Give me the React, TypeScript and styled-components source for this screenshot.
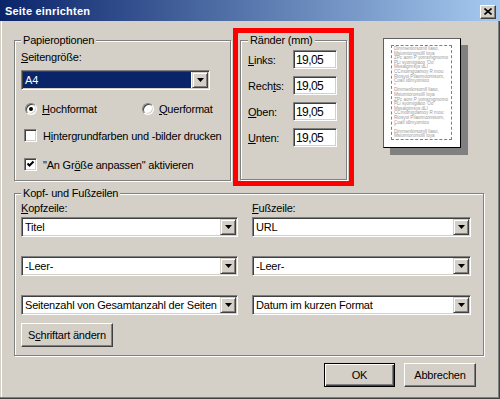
import React from "react";
import styled, { createGlobalStyle } from "styled-components";

const GlobalStyle = createGlobalStyle`
  html, body {
    margin: 0;
    padding: 0;
    background: #d4d0c8;
  }
  body {
    font-family: "Liberation Sans", Arial, sans-serif;
    font-size: 11px;
  }
`;

const Dialog = styled.div`
  width: 500px;
  height: 399px;
  box-sizing: border-box;
  display: flex;
  flex-direction: column;
  background: #d4d0c8;
  color: #000;
  letter-spacing: -0.2px;
  overflow: hidden;
  box-shadow: inset -1px -1px 0 #404040, inset -2px -2px 0 #808080,
    inset 1px 1px 0 #d4d0c8, inset 2px 2px 0 #fff;
`;

const TitleBar = styled.div`
  height: 21px;
  flex: none;
  display: flex;
  align-items: center;
  justify-content: space-between;
  padding: 0 4px 0 5px;
  background: linear-gradient(to right, #0a246a, #a6caf0);
`;

const TitleText = styled.span`
  color: #fff;
  font-weight: bold;
  font-size: 11px;
  letter-spacing: 0.2px;
`;

const CloseButton = styled.div`
  width: 16px;
  height: 14px;
  margin-top: 2px;
  box-sizing: border-box;
  display: flex;
  align-items: center;
  justify-content: center;
  background: #d4d0c8;
  border: 1px solid;
  border-color: #fff #404040 #404040 #fff;
  box-shadow: inset -1px -1px 0 #808080;
`;

const Body = styled.div`
  flex: 1;
  display: flex;
  flex-direction: column;
  padding: 7px 14px 0;
`;

const TopRow = styled.div`
  display: flex;
  align-items: flex-start;
`;

const Group = styled.fieldset`
  margin: 0;
  min-inline-size: 0;
  box-sizing: border-box;
  border: 1px solid #808080;
  box-shadow: 1px 1px 0 #fff, inset 1px 1px 0 #fff;
`;

const Legend = styled.legend`
  padding: 0 2px;
  line-height: 13px;
  background: #d4d0c8;
`;

const PaperGroup = styled(Group)`
  width: 217px;
  height: 147px;
  margin-top: 6px;
  padding: 4px 6px 0 6px;
  display: flex;
  flex-direction: column;
`;

const RedFrame = styled.div`
  width: 121px;
  height: 158px;
  box-sizing: border-box;
  margin-left: 2px;
  border: 5px solid #ff0000;
  padding: 1px 2px;
`;

const MarginGroup = styled(Group)`
  width: 107px;
  height: 146px;
  padding: 3px 4px 0 7px;
  display: flex;
  flex-direction: column;
  gap: 7px;
`;

const HeaderGroup = styled(Group)`
  width: 470px;
  height: 169px;
  margin-top: 1px;
  padding: 2px 12px 0 6px;
  display: flex;
  gap: 14px;
`;

const FieldLabel = styled.div`
  line-height: 13px;
  white-space: nowrap;
`;

const U = styled.span`
  text-decoration: underline;
`;

const ComboSlot = styled.div`
  margin-top: 6px;
`;

const Combo = styled.div<{ $w: number }>`
  width: ${(p) => p.$w}px;
  height: 20px;
  flex: none;
  box-sizing: border-box;
  display: flex;
  background: #fff;
  border: 1px solid;
  border-color: #808080 #fff #fff #808080;
  box-shadow: inset 1px 1px 0 #404040, inset -1px -1px 0 #d4d0c8;
  padding: 1px;
`;

const ComboValue = styled.div<{ $selected?: boolean }>`
  flex: 1;
  display: flex;
  align-items: center;
  padding-left: 2px;
  margin-right: 1px;
  white-space: nowrap;
  overflow: hidden;
  background: ${(p) => (p.$selected ? "#0a246a" : "transparent")};
  color: ${(p) => (p.$selected ? "#fff" : "#000")};
`;

const DropButton = styled.div`
  width: 16px;
  flex: none;
  box-sizing: border-box;
  display: flex;
  align-items: center;
  justify-content: center;
  background: #d4d0c8;
  border: 1px solid;
  border-color: #d4d0c8 #404040 #404040 #d4d0c8;
  box-shadow: inset 1px 1px 0 #fff, inset -1px -1px 0 #808080;
`;

const OptionRow = styled.div<{ $mt: number }>`
  display: flex;
  align-items: center;
  height: 13px;
  margin-top: ${(p) => p.$mt}px;
  white-space: nowrap;
`;

const RadioItem = styled.div<{ $w?: number; $indent?: number }>`
  display: flex;
  align-items: center;
  gap: 5px;
  width: ${(p) => (p.$w ? `${p.$w}px` : "auto")};
  margin-left: ${(p) => p.$indent ?? 0}px;
`;

const RadioCircle = styled.span<{ $checked?: boolean }>`
  position: relative;
  width: 12px;
  height: 12px;
  flex: none;
  box-sizing: border-box;
  border-radius: 50%;
  background: #fff;
  border: 1px solid;
  border-color: #808080 #fff #fff #808080;
  box-shadow: inset 1px 1px 0 #404040, inset -1px -1px 0 #d4d0c8;

  &::after {
    content: "";
    display: ${(p) => (p.$checked ? "block" : "none")};
    position: absolute;
    left: 3px;
    top: 3px;
    width: 4px;
    height: 4px;
    border-radius: 50%;
    background: #000;
  }
`;

const CheckItem = styled.div`
  display: flex;
  align-items: center;
  gap: 6px;
  margin-left: 3px;
`;

const CheckBox = styled.span`
  width: 13px;
  height: 13px;
  flex: none;
  box-sizing: border-box;
  display: flex;
  background: #fff;
  border: 1px solid;
  border-color: #808080 #fff #fff #808080;
  box-shadow: inset 1px 1px 0 #404040, inset -1px -1px 0 #d4d0c8;
`;

const MarginRow = styled.div`
  display: flex;
  align-items: center;
  height: 19px;
`;

const MarginLabel = styled.div`
  width: 45px;
  flex: none;
`;

const TextField = styled.input`
  width: 44px;
  height: 19px;
  box-sizing: border-box;
  margin: 0;
  padding: 0 0 0 2px;
  font-family: "Liberation Sans", Arial, sans-serif;
  font-size: 12px;
  letter-spacing: -0.6px;
  color: #000;
  background: #fff;
  outline: none;
  border: 1px solid;
  border-color: #808080 #fff #fff #808080;
  box-shadow: inset 1px 1px 0 #404040, inset -1px -1px 0 #d4d0c8;
`;

const Preview = styled.div`
  width: 78px;
  height: 110px;
  box-sizing: border-box;
  margin: 10px 0 0 29px;
  padding: 6px 8px 7px 7px;
  display: flex;
  background: #fff;
  border: 1px solid;
  border-color: #606060 #000 #000 #606060;
  box-shadow: 7px 7px 0 #808080;
`;

const PreviewMargin = styled.div`
  flex: 1;
  overflow: hidden;
  padding: 1px 1px 0 2px;
  border: 1px dashed #808080;
  font-size: 4.6px;
  line-height: 4.6px;
  letter-spacing: 0;
  color: #9a9a9a;
  white-space: nowrap;
`;

const HFColumn = styled.div<{ $w: number }>`
  width: ${(p) => p.$w}px;
  display: flex;
  flex-direction: column;
`;

const ComboStack = styled.div`
  display: flex;
  flex-direction: column;
  gap: 19px;
  margin-top: 2px;
`;

const Button = styled.button<{ $w: number; $default?: boolean }>`
  width: ${(p) => p.$w}px;
  height: 24px;
  box-sizing: border-box;
  margin: 0;
  padding: 0;
  font: inherit;
  letter-spacing: inherit;
  color: #000;
  background: #d4d0c8;
  border: 1px solid;
  border-color: ${(p) => (p.$default ? "#000" : "#fff #404040 #404040 #fff")};
  box-shadow: ${(p) =>
    p.$default
      ? "inset 1px 1px 0 #fff, inset -1px -1px 0 #404040, inset -2px -2px 0 #808080"
      : "inset -1px -1px 0 #808080, inset 1px 1px 0 #d4d0c8"};
`;

const FontButton = styled(Button)`
  margin-top: 8px;
`;

const ButtonRow = styled.div`
  width: 470px;
  box-sizing: border-box;
  display: flex;
  justify-content: flex-end;
  gap: 9px;
  margin-top: 7px;
  padding-right: 8px;
`;

const Arrow = () => (
  <svg width="7" height="4" viewBox="0 0 7 4">
    <polygon points="0,0 7,0 3.5,4" fill="#000" />
  </svg>
);

const ComboBox: React.FC<{ w: number; value: string; selected?: boolean }> = ({
  w,
  value,
  selected,
}) => (
  <Combo $w={w}>
    <ComboValue $selected={selected}>{value}</ComboValue>
    <DropButton>
      <Arrow />
    </DropButton>
  </Combo>
);

const previewBlock = [
  "Dimmenlorsomll liaso,",
  "Msiomtoromolll loya",
  "ZPc aom P yomsmgmomo",
  " PLi syomigiaoo 'Oo'",
  "Mssaigimsys dLl",
  "CCmoimgoamoy R mou:",
  "Riosyoi Pilaomoomisom,",
  "Coall idlmyomioo",
  "*",
];

// two full blocks and the start of a third, as far as the page holds
const previewLines = [...previewBlock, ...previewBlock, ...previewBlock.slice(0, 2)];

const margins = [
  { key: "links", label: <><U>L</U>inks:</> },
  { key: "rechts", label: <>Rech<U>t</U>s:</> },
  { key: "oben", label: <><U>O</U>ben:</> },
  { key: "unten", label: <><U>U</U>nten:</> },
];

const App: React.FC = () => {
  return (
    <>
      <GlobalStyle />
      <Dialog>
        <TitleBar>
          <TitleText>Seite einrichten</TitleText>
          <CloseButton>
            <svg width="8" height="7" viewBox="0 0 8 7">
              <path d="M0.5 0.5 L7.5 6.5 M7.5 0.5 L0.5 6.5" stroke="#000" strokeWidth="1.6" />
            </svg>
          </CloseButton>
        </TitleBar>

        <Body>
          <TopRow>
            <PaperGroup>
              <Legend>Papieroptionen</Legend>
              <FieldLabel>
                <U>S</U>eitengröße:
              </FieldLabel>
              <ComboSlot>
                <ComboBox w={189} value="A4" selected />
              </ComboSlot>
              <OptionRow $mt={12}>
                <RadioItem $w={117} $indent={4}>
                  <RadioCircle $checked />
                  <span>
                    <U>H</U>ochformat
                  </span>
                </RadioItem>
                <RadioItem>
                  <RadioCircle />
                  <span>
                    <U>Q</U>uerformat
                  </span>
                </RadioItem>
              </OptionRow>
              <OptionRow $mt={14}>
                <CheckItem>
                  <CheckBox />
                  <span>
                    H<U>i</U>ntergrundfarben und -bilder drucken
                  </span>
                </CheckItem>
              </OptionRow>
              <OptionRow $mt={16}>
                <CheckItem>
                  <CheckBox>
                    <svg width="11" height="11" viewBox="0 0 11 11">
                      <path d="M2.5 4.5 L4.5 6.5 L8.5 2.5" stroke="#000" strokeWidth="2" fill="none" />
                    </svg>
                  </CheckBox>
                  <span>
                    "An Gr<U>ö</U>ße anpassen" aktivieren
                  </span>
                </CheckItem>
              </OptionRow>
            </PaperGroup>

            <RedFrame>
              <MarginGroup>
                <Legend>Ränder (mm)</Legend>
                {margins.map((m) => (
                  <MarginRow key={m.key}>
                    <MarginLabel>{m.label}</MarginLabel>
                    <TextField readOnly defaultValue="19,05" />
                  </MarginRow>
                ))}
              </MarginGroup>
            </RedFrame>

            <Preview>
              <PreviewMargin>
                {previewLines.map((line, i) => (
                  <div key={i}>{line}</div>
                ))}
              </PreviewMargin>
            </Preview>
          </TopRow>

          <HeaderGroup>
            <Legend>Kopf- und Fußzeilen</Legend>
            <HFColumn $w={217}>
              <FieldLabel>
                <U>K</U>opfzeile:
              </FieldLabel>
              <ComboStack>
                <ComboBox w={217} value="Titel" />
                <ComboBox w={217} value="-Leer-" />
                <ComboBox w={217} value="Seitenzahl von Gesamtanzahl der Seiten" />
              </ComboStack>
              <FontButton $w={92}>
                S<U>c</U>hriftart ändern
              </FontButton>
            </HFColumn>
            <HFColumn $w={219}>
              <FieldLabel>
                <U>F</U>ußzeile:
              </FieldLabel>
              <ComboStack>
                <ComboBox w={219} value="URL" />
                <ComboBox w={219} value="-Leer-" />
                <ComboBox w={219} value="Datum im kurzen Format" />
              </ComboStack>
            </HFColumn>
          </HeaderGroup>

          <ButtonRow>
            <Button $w={71} $default>
              OK
            </Button>
            <Button $w={72}>Abbrechen</Button>
          </ButtonRow>
        </Body>
      </Dialog>
    </>
  );
};

export default App;
